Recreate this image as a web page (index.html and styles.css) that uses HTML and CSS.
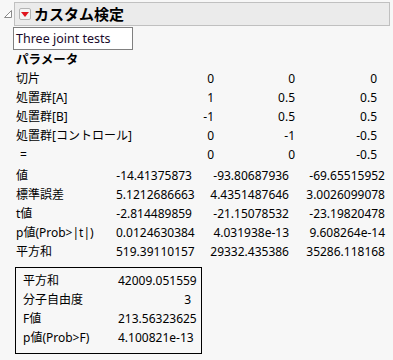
FILE: index.html
```html
<!DOCTYPE html>
<html lang="ja">
<head>
<meta charset="utf-8">
<link rel="stylesheet" href="styles.css">
</head>
<body>
<div class="outline">
  <div class="header">
    <svg class="disclosure" width="8" height="8" viewBox="0 0 8 8"><path d="M7.5 0.5 L7.5 7.5 L0.5 7.5 Z" fill="#fff" stroke="#8a8a8a" stroke-width="1"/></svg>
    <div class="titlebar">
      <span class="menu"><svg width="8" height="5" viewBox="0 0 8 5"><path d="M0 0 H8 L4 5 Z" fill="#e0141e"/></svg></span>
      <span class="title">カスタム検定</span>
    </div>
  </div>
  <div class="content">
    <div class="note">Three joint tests</div>
    <div class="section-title">パラメータ</div>
    <div class="grid params">
      <span class="lbl">切片</span><span>0</span><span>0</span><span>0</span>
      <span class="lbl">処置群[A]</span><span>1</span><span>0.5</span><span>0.5</span>
      <span class="lbl">処置群[B]</span><span>-1</span><span>0.5</span><span>0.5</span>
      <span class="lbl">処置群[コントロール]</span><span>0</span><span>-1</span><span>-0.5</span>
      <span class="lbl eq">=</span><span>0</span><span>0</span><span>-0.5</span>
    </div>
    <div class="grid values">
      <span class="lbl">値</span><span>-14.41375873</span><span>-93.80687936</span><span>-69.65515952</span>
      <span class="lbl">標準誤差</span><span>5.1212686663</span><span>4.4351487646</span><span>3.0026099078</span>
      <span class="lbl">t値</span><span>-2.814489859</span><span>-21.15078532</span><span>-23.19820478</span>
      <span class="lbl">p値(Prob&gt;|t|)</span><span>0.0124630384</span><span>4.031938e-13</span><span>9.608264e-14</span>
      <span class="lbl">平方和</span><span>519.39110157</span><span>29332.435386</span><span>35286.118168</span>
    </div>
    <div class="ftest">
      <div class="grid fgrid">
        <span class="lbl">平方和</span><span>42009.051559</span>
        <span class="lbl">分子自由度</span><span>3</span>
        <span class="lbl">F値</span><span>213.56323625</span>
        <span class="lbl">p値(Prob&gt;F)</span><span>4.100821e-13</span>
      </div>
    </div>
  </div>
</div>
</body>
</html>
```

FILE: styles.css
```css
html, body {
  margin: 0;
  padding: 0;
  background: #f7f7f7;
}
body {
  font-family: "Noto Sans", "Noto Sans CJK JP", sans-serif;
  font-size: 12px;
  color: #000;
}
.outline {
  width: 393px;
}
.header {
  display: flex;
  align-items: flex-start;
  padding-top: 2px;
  padding-right: 3px;
}
.disclosure {
  margin: 8px 2px 0 4px;
  flex: none;
}
.titlebar {
  flex: 1;
  height: 22px;
  background: #ebebeb;
  border: 1px solid #c0c0c0;
  display: flex;
  align-items: center;
  padding-left: 4px;
}
.menu {
  width: 10px;
  height: 10px;
  border: 1px solid #b4b4b4;
  border-radius: 2px;
  background: #f4f4f4;
  display: flex;
  align-items: center;
  justify-content: center;
  margin-right: 3px;
}
.title {
  font-family: "Noto Sans CJK JP", sans-serif;
  font-weight: bold;
  font-size: 15px;
  line-height: 22px;
}
.content {
  padding-left: 13px;
  padding-top: 1px;
}
.note {
  width: 116px;
  height: 21px;
  border: 1px solid #808080;
  background: #fff;
  padding-left: 2px;
  line-height: 21px;
  font-size: 12.5px;
  color: #1a0a2a;
}
.section-title {
  margin-top: 1px;
  padding-left: 3px;
  height: 18px;
  line-height: 18px;
  font-weight: bold;
  font-size: 12.5px;
}
.grid {
  display: grid;
  grid-auto-rows: 19px;
  align-items: center;
  padding-left: 3px;
  white-space: nowrap;
}
.grid span {
  text-align: right;
  line-height: 19px;
}
.grid .lbl {
  text-align: left;
}
.params {
  grid-template-columns: 150px 48px 81px 82px;
}
.params .eq {
  padding-left: 4px;
}
.values {
  margin-top: 2px;
  grid-template-columns: 100px 76px 97px 96px;
}
.ftest {
  margin: 6px 0 0 2px;
  width: 185px;
  border: 1px solid #000;
  padding: 3px 0 6px 0;
}
.fgrid {
  padding-left: 7px;
  grid-template-columns: 95px 73px;
}
```
